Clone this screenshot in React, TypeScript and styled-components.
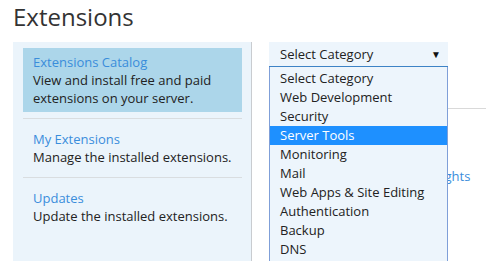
import { FC } from "react";
import styled, { createGlobalStyle } from "styled-components";

const GlobalStyle = createGlobalStyle`
  html, body {
    margin: 0;
    padding: 0;
    background: #fff;
    font-family: "Open Sans", "Noto Sans", sans-serif;
    overflow: hidden;
  }
`;

const Page = styled.div`
  width: 486px;
  height: 261px;
  padding-left: 13px;
  box-sizing: border-box;
  overflow: hidden;
`;

const Title = styled.h1`
  margin: 0;
  height: 42px;
  font-size: 24px;
  font-weight: 400;
  line-height: 34px;
  color: #333;
`;

const Body = styled.div`
  display: flex;
  gap: 17px;
`;

const Sidebar = styled.nav`
  flex: none;
  width: 239px;
  height: 240px;
  box-sizing: border-box;
  background: #ebf4fb;
  border-right: 1px solid #c9ccd0;
  padding: 6px 9px 0 10px;
`;

const NavItem = styled.a<{ $active?: boolean }>`
  display: block;
  padding: 5px 10px;
  background: ${p => (p.$active ? "#acd6ea" : "transparent")};
  font-size: 13px;
  line-height: 18px;
  color: #222;
  text-decoration: none;
`;

const NavTitle = styled.div`
  color: #3a8ddb;
`;

const Divider = styled.hr`
  margin: 6px 0;
  border: 0;
  border-top: 1px solid #d9dde0;
`;

const Main = styled.div`
  position: relative;
  flex: 1;
`;

const SelectBox = styled.div`
  width: 179px;
  height: 25px;
  box-sizing: border-box;
  background: #edf5fc;
  border-bottom: 1px solid #3d83c6;
  padding: 0 7px 0 11px;
  display: flex;
  align-items: center;
  justify-content: space-between;
  font-size: 13px;
  color: #222;
`;

const Arrow = styled.span`
  font-size: 10px;
  color: #111;
`;

const Rule = styled.div`
  margin-top: 41px;
  border-top: 1px solid #d9d9d9;
`;

const Highlights = styled.a`
  display: block;
  margin: 58px 0 0 141px;
  font-size: 13px;
  line-height: 18px;
  color: #3a8ddb;
  text-decoration: none;
`;

const OptionList = styled.ul`
  position: absolute;
  top: 25px;
  left: 0;
  width: 179px;
  box-sizing: border-box;
  margin: 0;
  padding: 2px 0 4px;
  list-style: none;
  background: #edf5fc;
  border: 1px solid #7f9fd8;
  border-top: 0;
`;

const Option = styled.li<{ $selected?: boolean }>`
  height: 19px;
  line-height: 19px;
  padding-left: 10px;
  font-size: 13px;
  white-space: nowrap;
  color: ${p => (p.$selected ? "#fff" : "#222")};
  background: ${p => (p.$selected ? "#1e90ff" : "transparent")};
`;

const navItems = [
  { title: "Extensions Catalog", text: "View and install free and paid extensions on your server." },
  { title: "My Extensions", text: "Manage the installed extensions." },
  { title: "Updates", text: "Update the installed extensions." }
];

const categories = [
  "Select Category",
  "Web Development",
  "Security",
  "Server Tools",
  "Monitoring",
  "Mail",
  "Web Apps & Site Editing",
  "Authentication",
  "Backup",
  "DNS"
];

const App: FC = () => (
  <Page>
    <GlobalStyle />
    <Title>Extensions</Title>
    <Body>
      <Sidebar>
        {navItems.map((item, i) => (
          <div key={item.title}>
            {i > 0 && <Divider />}
            <NavItem href="#" $active={i === 0}>
              <NavTitle>{item.title}</NavTitle>
              {item.text}
            </NavItem>
          </div>
        ))}
      </Sidebar>
      <Main>
        <SelectBox>
          Select Category
          <Arrow>▼</Arrow>
        </SelectBox>
        <Rule />
        <Highlights href="#">Highlights</Highlights>
        <OptionList>
          {categories.map(c => (
            <Option key={c} $selected={c === "Server Tools"}>
              {c}
            </Option>
          ))}
        </OptionList>
      </Main>
    </Body>
  </Page>
);

export default App;
